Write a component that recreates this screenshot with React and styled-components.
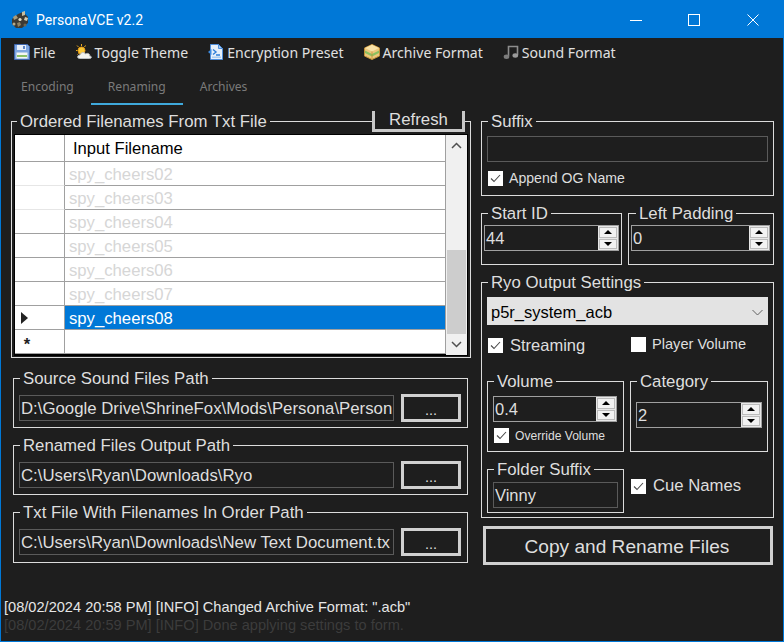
import React from "react";
import styled, { createGlobalStyle } from "styled-components";

const GlobalStyle = createGlobalStyle`
  html, body {
    margin: 0;
    padding: 0;
    background: #1e1e1e;
  }
  * {
    box-sizing: border-box;
  }
`;

const files = ["spy_cheers02", "spy_cheers03", "spy_cheers04", "spy_cheers05", "spy_cheers06", "spy_cheers07"];

const AppIcon = () => (
  <svg width="20" height="20" viewBox="0 0 20 20">
    <path d="M2 9 L8 4 L13 2 L18 7 L18 13 L12 18 L6 18 L2 14 Z" fill="#3c3a34" />
    <path d="M12 2 L15 1 L15 5 L12 6 Z" fill="#c8bfa0" />
    <path d="M3 7 L6 5 L8 8 L4 10 Z" fill="#a89c7c" />
    <path d="M15 7 L18 8 L17 11 L14 10 Z" fill="#d4ccb0" />
    <path d="M7 13 L10 12 L11 15 L8 17 Z" fill="#8f8468" />
    <circle cx="10" cy="9.5" r="1.6" fill="#e4dfc8" />
    <circle cx="15" cy="15" r="1.5" fill="#6d6650" />
    <circle cx="4" cy="14" r="1.5" fill="#b5aa8a" />
  </svg>
);

const FloppyIcon = () => (
  <svg width="16" height="16" viewBox="0 0 16 16">
    <path d="M0.5 0.5 H13.5 L15.5 2.5 V15.5 H0.5 Z" fill="#7ea6e0" stroke="#3f66ad" />
    <rect x="3" y="1" width="9" height="5" fill="#e8f0fb" />
    <rect x="9" y="2" width="2" height="3" fill="#5b84c8" />
    <rect x="2.5" y="8.5" width="11" height="6" fill="#f4f6f2" />
    <rect x="3" y="11" width="10" height="2" fill="#8cc068" />
  </svg>
);

const WeatherIcon = () => (
  <svg width="16" height="16" viewBox="0 0 16 16">
    <g stroke="#e8a820" strokeWidth="1">
      <path d="M5.5 0 V2 M1 1.5 L2.5 3 M0 6.5 H1.5 M9.5 1.5 L8.5 3 M1.5 10.5 L2.5 9.5" />
    </g>
    <circle cx="5.5" cy="6.5" r="3.5" fill="#f8c838" stroke="#e89c18" />
    <path d="M3.5 14.5 C1 14.5 1 11 4 11 C4.5 8.5 8 7.5 9.5 10 C11.5 8.5 14.5 10 13.5 12 C16 12 16 14.5 13.5 14.5 Z" fill="#f2f2ee" stroke="#b8bcc0" />
  </svg>
);

const CodeFileIcon = () => (
  <svg width="16" height="16" viewBox="0 0 16 16">
    <path d="M2.5 0.5 H10.5 L14.5 4.5 V15.5 H2.5 Z" fill="#e6f0fb" stroke="#4f8fdc" />
    <path d="M10.5 0.5 V4.5 H14.5 Z" fill="#a8ccf0" stroke="#4f8fdc" />
    <path d="M0 8 L3.5 5 V11 Z" fill="#3d8be0" />
    <path d="M5 5.5 L8 8 L5 10.5 M8 11 H12" fill="none" stroke="#2f7fd8" strokeWidth="1.4" />
    <rect x="4" y="12.5" width="9" height="1.5" fill="#a8ccf0" />
  </svg>
);

const BoxIcon = () => (
  <svg width="16" height="16" viewBox="0 0 16 16">
    <path d="M8 0.5 L15.5 4 V12 L8 15.5 L0.5 12 V4 Z" fill="#edc77c" stroke="#c49238" />
    <path d="M8 0.8 L15 4 L8 7.4 L1 4 Z" fill="#f8e2a8" />
    <path d="M1 6.5 L8 10 L15 6.5 V9 L8 12.4 L1 9 Z" fill="#8cc060" />
    <path d="M8 7.4 V15" stroke="#c49238" strokeWidth="0.8" />
  </svg>
);

const MusicIcon = () => (
  <svg width="16" height="16" viewBox="0 0 16 16">
    <path d="M5.5 12 V2.5 H14.5 V11" fill="none" stroke="#8c8c8c" strokeWidth="1.6" />
    <ellipse cx="3.5" cy="12.8" rx="2.8" ry="2.2" fill="#7c7c7c" />
    <ellipse cx="12.3" cy="11.5" rx="2.8" ry="2.2" fill="#9a9a9a" />
  </svg>
);

const Group = ({ title, height, width, pad, inset = 6, children }) => (
  <Fieldset $height={height} $width={width}>
    <Legend $inset={inset}>{title}</Legend>
    <GroupBody $pad={pad}>{children}</GroupBody>
  </Fieldset>
);

const PathRow = ({ title, value, last }) => (
  <Group title={title} width={455} height={last ? 60 : 59} pad="7px 6px 0 5px">
    <PathLine>
      <PathField>{value}</PathField>
      <BrowseButton>...</BrowseButton>
    </PathLine>
  </Group>
);

const Spinner = ({ value }) => (
  <SpinField>
    <SpinValue>{value}</SpinValue>
    <SpinButtons>
      <SpinButton>
        <ArrowUp />
      </SpinButton>
      <SpinButton>
        <ArrowDown />
      </SpinButton>
    </SpinButtons>
  </SpinField>
);

const Check = ({ checked = true, children, size, labelGap }) => (
  <CheckRow $gap={labelGap}>
    <CheckBox>
      {checked && (
        <svg width="15" height="15" viewBox="0 0 15 15">
          <path d="M3 7.5 L6 10.5 L12 4" fill="none" stroke="#4a4a4a" strokeWidth="1.1" />
        </svg>
      )}
    </CheckBox>
    <CheckLabel $size={size}>{children}</CheckLabel>
  </CheckRow>
);

const App = () => {
  return (
    <>
      <GlobalStyle />
      <Window>
        <TitleBar>
          <AppIconWrap>
            <AppIcon />
          </AppIconWrap>
          <TitleText>PersonaVCE v2.2</TitleText>
          <WindowButtons>
            <WindowButton>
              <svg width="12" height="12" viewBox="0 0 12 12">
                <path d="M0 6.5 H12" stroke="#fff" />
              </svg>
            </WindowButton>
            <WindowButton>
              <svg width="12" height="12" viewBox="0 0 12 12">
                <rect x="0.5" y="0.5" width="11" height="11" fill="none" stroke="#fff" />
              </svg>
            </WindowButton>
            <WindowButton>
              <svg width="12" height="12" viewBox="0 0 12 12">
                <path d="M0.5 0.5 L11.5 11.5 M11.5 0.5 L0.5 11.5" stroke="#fff" />
              </svg>
            </WindowButton>
          </WindowButtons>
        </TitleBar>

        <MenuBar>
          <MenuItem>
            <FloppyIcon />
            File
          </MenuItem>
          <MenuItem>
            <WeatherIcon />
            Toggle Theme
          </MenuItem>
          <MenuItem>
            <CodeFileIcon />
            Encryption Preset
          </MenuItem>
          <MenuItem>
            <BoxIcon />
            Archive Format
          </MenuItem>
          <MenuItem>
            <MusicIcon />
            Sound Format
          </MenuItem>
        </MenuBar>

        <TabBar>
          <Tab>Encoding</Tab>
          <Tab $active>Renaming</Tab>
          <Tab>Archives</Tab>
        </TabBar>

        <TabPage>
          <LeftColumn>
            <Group title="Ordered Filenames From Txt File" width={460} height={246} pad="4px 2px 0 2px" inset={5}>
              <Grid>
                <GridTable>
                  <GridRow $header>
                    <RowHead $header />
                    <HeaderCell>Input Filename</HeaderCell>
                  </GridRow>
                  {files.map((name, i) => (
                    <GridRow key={name}>
                      <RowHead $faint={i < 2} />
                      <Cell $dim>{name}</Cell>
                    </GridRow>
                  ))}
                  <GridRow>
                    <RowHead>
                      <RowPointer />
                    </RowHead>
                    <Cell $selected>spy_cheers08</Cell>
                  </GridRow>
                  <GridRow>
                    <RowHead>
                      <NewRowMark>*</NewRowMark>
                    </RowHead>
                    <Cell />
                  </GridRow>
                </GridTable>
                <ScrollBar>
                  <ScrollArrow>
                    <svg width="11" height="7" viewBox="0 0 11 7">
                      <path d="M1 6 L5.5 1.5 L10 6" fill="none" stroke="#505050" strokeWidth="1.5" />
                    </svg>
                  </ScrollArrow>
                  <ScrollThumb />
                  <ScrollArrow>
                    <svg width="11" height="7" viewBox="0 0 11 7">
                      <path d="M1 1 L5.5 5.5 L10 1" fill="none" stroke="#505050" strokeWidth="1.5" />
                    </svg>
                  </ScrollArrow>
                </ScrollBar>
              </Grid>
            </Group>
            <RefreshButton>Refresh</RefreshButton>
            <PathStack>
              <PathRow title="Source Sound Files Path" value="D:\Google Drive\ShrineFox\Mods\Persona\Person" />
              <PathRow title="Renamed Files Output Path" value="C:\Users\Ryan\Downloads\Ryo" />
              <PathRow title="Txt File With Filenames In Order Path" value="C:\Users\Ryan\Downloads\New Text Document.tx" last />
            </PathStack>
          </LeftColumn>

          <RightColumn>
            <Group title="Suffix" width={293} height={84} pad="6px 6px 0 5px">
              <PlainField $width={281} />
              <CheckSlot $top={8}>
                <Check size={14.1} labelGap={6}>Append OG Name</Check>
              </CheckSlot>
            </Group>

            <SpinnerRow>
              <Group title="Start ID" width={141} height={61} pad="3px 2px 0 2px">
                <Spinner value="44" />
              </Group>
              <Group title="Left Padding" width={146} height={61} pad="3px 3px 0 2px" inset={7}>
                <Spinner value="0" />
              </Group>
            </SpinnerRow>

            <Group title="Ryo Output Settings" width={293} height={245} pad="6px 5px 0 5px">
              <SelectBox>
                p5r_system_acb
                <svg width="11" height="7" viewBox="0 0 11 7">
                  <path d="M0.5 1 L5.5 6 L10.5 1" fill="none" stroke="#606060" />
                </svg>
              </SelectBox>
              <OptionRow>
                <OptionSlot $width={142}>
                  <Check size={16.5} labelGap={7}>Streaming</Check>
                </OptionSlot>
                <OptionSlot>
                  <Check checked={false} size={14.6} labelGap={6}>Player Volume</Check>
                </OptionSlot>
              </OptionRow>
              <VolumeRow>
                <Group title="Volume" width={137} height={80} pad="6px 6px 0 5px">
                  <Spinner value="0.4" />
                  <CheckSlot $top={6}>
                    <Check size={12.1} labelGap={6}>Override Volume</Check>
                  </CheckSlot>
                </Group>
                <Group title="Category" width={138} height={80} pad="12px 5px 0 5px">
                  <Spinner value="2" />
                </Group>
              </VolumeRow>
              <FolderRow>
                <Group title="Folder Suffix" width={137} height={53} pad="4px 6px 0 5px">
                  <PlainField $width={125}>Vinny</PlainField>
                </Group>
                <CueSlot>
                  <Check size={16.7} labelGap={7}>Cue Names</Check>
                </CueSlot>
              </FolderRow>
            </Group>

            <CopyButton>Copy and Rename Files</CopyButton>
          </RightColumn>
        </TabPage>

        <LogPanel>
          <LogLine>[08/02/2024 20:58 PM] [INFO] Changed Archive Format: ".acb"</LogLine>
          <LogLine $old>[08/02/2024 20:59 PM] [INFO] Done applying settings to form.</LogLine>
        </LogPanel>
      </Window>
    </>
  );
};

const Window = styled.div`
  width: 784px;
  height: 642px;
  display: flex;
  flex-direction: column;
  overflow: hidden;
  background: #1e1e1e;
  border: 1px solid #0078d7;
  font-family: "Liberation Sans", Arial, sans-serif;
  color: #dedede;
`;

const TitleBar = styled.div`
  height: 37px;
  flex: none;
  display: flex;
  align-items: center;
  background: #0078d7;
  color: #fff;
`;
const AppIconWrap = styled.div`
  display: flex;
  margin-left: 9px;
  margin-right: 6px;
`;
const TitleText = styled.div`
  font-family: Roboto, sans-serif;
  font-size: 14px;
`;
const WindowButtons = styled.div`
  display: flex;
  margin-left: auto;
  margin-right: 1px;
`;
const WindowButton = styled.div`
  width: 58.5px;
  height: 37px;
  display: flex;
  align-items: center;
  justify-content: center;
`;

const MenuBar = styled.div`
  height: 30px;
  flex: none;
  display: flex;
  align-items: center;
  gap: 20px;
  padding: 0 0 2px 13px;
`;
const MenuItem = styled.div`
  display: flex;
  align-items: center;
  gap: 3px;
  font-family: "Noto Sans", sans-serif;
  font-size: 14.1px;
  color: #e0e0e0;
`;

const TabBar = styled.div`
  height: 37px;
  flex: none;
  display: flex;
  padding-left: 3px;
`;
const Tab = styled.div`
  padding: 1px 17px 0;
  display: flex;
  align-items: center;
  font-family: "Noto Sans", sans-serif;
  font-size: 12.1px;
  color: #7a7a7a;
  border-bottom: 2px solid ${(p) => (p.$active ? "#3fa9dc" : "transparent")};
`;

const TabPage = styled.div`
  display: flex;
  gap: 10px;
  padding: 7px 0 0 10px;
`;
const LeftColumn = styled.div`
  position: relative;
  width: 460px;
`;
const RightColumn = styled.div`
  width: 293px;
  display: flex;
  flex-direction: column;
  gap: 8px;
`;

const Fieldset = styled.fieldset`
  margin: 0;
  padding: 0;
  min-width: 0;
  flex: none;
  width: ${(p) => p.$width}px;
  height: ${(p) => p.$height}px;
  border: 1px solid #dcdcdc;
`;
const Legend = styled.legend`
  margin-left: ${(p) => p.$inset}px;
  padding: 1px 3px 0;
  font-size: 16.8px;
  line-height: 17px;
  color: #dedede;
  white-space: nowrap;
`;
const GroupBody = styled.div`
  padding: ${(p) => p.$pad};
`;

const Grid = styled.div`
  display: flex;
  width: 454px;
  height: 222px;
  border: 1px solid #000;
  background: #000;
`;
const GridTable = styled.div`
  width: 431px;
  background: #fff;
  align-self: flex-start;
`;
const GridRow = styled.div`
  display: grid;
  grid-template-columns: 50px 381px;
  height: ${(p) => (p.$header ? 27 : 24)}px;
`;
const RowHead = styled.div`
  display: flex;
  align-items: center;
  justify-content: center;
  background: #fff;
  border-right: 1px solid #a0a0a0;
  border-bottom: 1px solid ${(p) => (p.$faint ? "#e6e6e6" : "#a0a0a0")};
`;
const HeaderCell = styled.div`
  display: flex;
  align-items: center;
  padding: 2px 0 0 8px;
  font-size: 16.6px;
  color: #000;
  border-right: 1px solid #a0a0a0;
  border-bottom: 1px solid #a0a0a0;
`;
const Cell = styled.div`
  display: flex;
  align-items: center;
  padding: 2px 0 0 4px;
  font-size: 16.7px;
  color: ${(p) => (p.$selected ? "#fff" : p.$dim ? "#d6d6d6" : "#000")};
  background: ${(p) => (p.$selected ? "#0078d7" : "#fff")};
  border-right: 1px solid #a0a0a0;
  border-bottom: 1px solid #a0a0a0;
`;
const RowPointer = styled.div`
  width: 0;
  height: 0;
  margin-right: 31px;
  border-top: 6px solid transparent;
  border-bottom: 6px solid transparent;
  border-left: 7px solid #222;
`;
const NewRowMark = styled.div`
  margin-right: 25px;
  margin-top: 5px;
  font-size: 16.5px;
  font-weight: 700;
  line-height: 16px;
  color: #222;
`;
const ScrollBar = styled.div`
  flex: 1;
  display: flex;
  flex-direction: column;
  align-items: center;
  background: #f0f0f0;
`;
const ScrollArrow = styled.div`
  height: 21px;
  flex: none;
  display: flex;
  align-items: center;
  justify-content: center;
`;
const ScrollThumb = styled.div`
  width: 19px;
  height: 84px;
  margin-top: auto;
  background: #cdcdcd;
`;

const RefreshButton = styled.div`
  position: absolute;
  top: -1px;
  left: 361px;
  width: 93px;
  height: 21px;
  display: flex;
  align-items: center;
  justify-content: center;
  padding-bottom: 1px;
  font-size: 16.8px;
  color: #dedede;
  background: #1e1e1e;
  border: 3px solid #c8c8c8;
  border-top: none;
`;

const PathStack = styled.div`
  display: flex;
  flex-direction: column;
  gap: 8px;
  margin: 11px 0 0 2px;
`;
const PathLine = styled.div`
  display: flex;
  align-items: center;
  gap: 7px;
`;
const PathField = styled.div`
  width: 375px;
  height: 26px;
  padding: 1px 1px 0;
  line-height: 24px;
  font-size: 16.8px;
  white-space: nowrap;
  overflow: hidden;
  color: #dedede;
  border: 1px solid #5a5a5a;
`;
const BrowseButton = styled.div`
  width: 60px;
  height: 28px;
  display: flex;
  align-items: center;
  justify-content: center;
  padding-top: 3px;
  font-size: 14.5px;
  color: #dedede;
  border: 3px solid #d0d0d0;
`;

const PlainField = styled.div`
  width: ${(p) => p.$width}px;
  height: 26px;
  padding-left: 1px;
  line-height: 24px;
  font-size: 16.5px;
  color: #dedede;
  border: 1px solid #5a5a5a;
`;

const CheckSlot = styled.div`
  margin-top: ${(p) => p.$top}px;
  margin-left: 1px;
`;
const CheckRow = styled.div`
  display: flex;
  align-items: center;
  gap: ${(p) => p.$gap}px;
  white-space: nowrap;
`;
const CheckBox = styled.div`
  width: 15px;
  height: 15px;
  flex: none;
  background: #fff;
`;
const CheckLabel = styled.div`
  font-size: ${(p) => p.$size}px;
  color: #dedede;
`;

const SpinnerRow = styled.div`
  display: flex;
  gap: 6px;
`;
const SpinField = styled.div`
  height: 26px;
  display: flex;
  justify-content: space-between;
  border: 1px solid #a0a0a0;
`;
const SpinValue = styled.div`
  padding-left: 1px;
  line-height: 24px;
  font-size: 16.5px;
  color: #dedede;
`;
const SpinButtons = styled.div`
  width: 20px;
  display: flex;
  flex-direction: column;
  gap: 1px;
  padding: 1px;
  background: #e8e8e8;
`;
const SpinButton = styled.div`
  flex: 1;
  display: flex;
  align-items: center;
  justify-content: center;
  background: #f2f2f2;
  border: 1px solid #bcbcbc;
`;
const ArrowUp = styled.div`
  width: 0;
  height: 0;
  border-left: 4px solid transparent;
  border-right: 4px solid transparent;
  border-bottom: 4px solid #000;
`;
const ArrowDown = styled.div`
  width: 0;
  height: 0;
  border-left: 4px solid transparent;
  border-right: 4px solid transparent;
  border-top: 4px solid #000;
`;

const SelectBox = styled.div`
  width: 281px;
  height: 28px;
  display: flex;
  align-items: center;
  justify-content: space-between;
  padding: 2px 5px 0 4px;
  font-size: 16.5px;
  color: #000;
  background: #e3e3e3;
`;
const OptionRow = styled.div`
  display: flex;
  height: 47px;
  padding-top: 11px;
`;
const OptionSlot = styled.div`
  width: ${(p) => (p.$width ? `${p.$width}px` : "auto")};
  margin-left: 1px;
`;
const VolumeRow = styled.div`
  display: flex;
  gap: 6px;
`;
const FolderRow = styled.div`
  display: flex;
  gap: 7px;
  margin-top: 8px;
`;
const CueSlot = styled.div`
  align-self: center;
  margin-bottom: 1px;
`;

const CopyButton = styled.div`
  width: 290px;
  height: 39px;
  margin-left: 2px;
  display: flex;
  align-items: center;
  justify-content: center;
  padding: 2px 2px 0 0;
  font-size: 19.1px;
  color: #dedede;
  border: 3px solid #d0d0d0;
`;

const LogPanel = styled.div`
  margin-top: auto;
  padding: 0 0 7px 3px;
  font-size: 14.6px;
  line-height: 18px;
`;
const LogLine = styled.div`
  white-space: nowrap;
  color: ${(p) => (p.$old ? "#3c3c3c" : "#e6e6e6")};
`;

export default App;
